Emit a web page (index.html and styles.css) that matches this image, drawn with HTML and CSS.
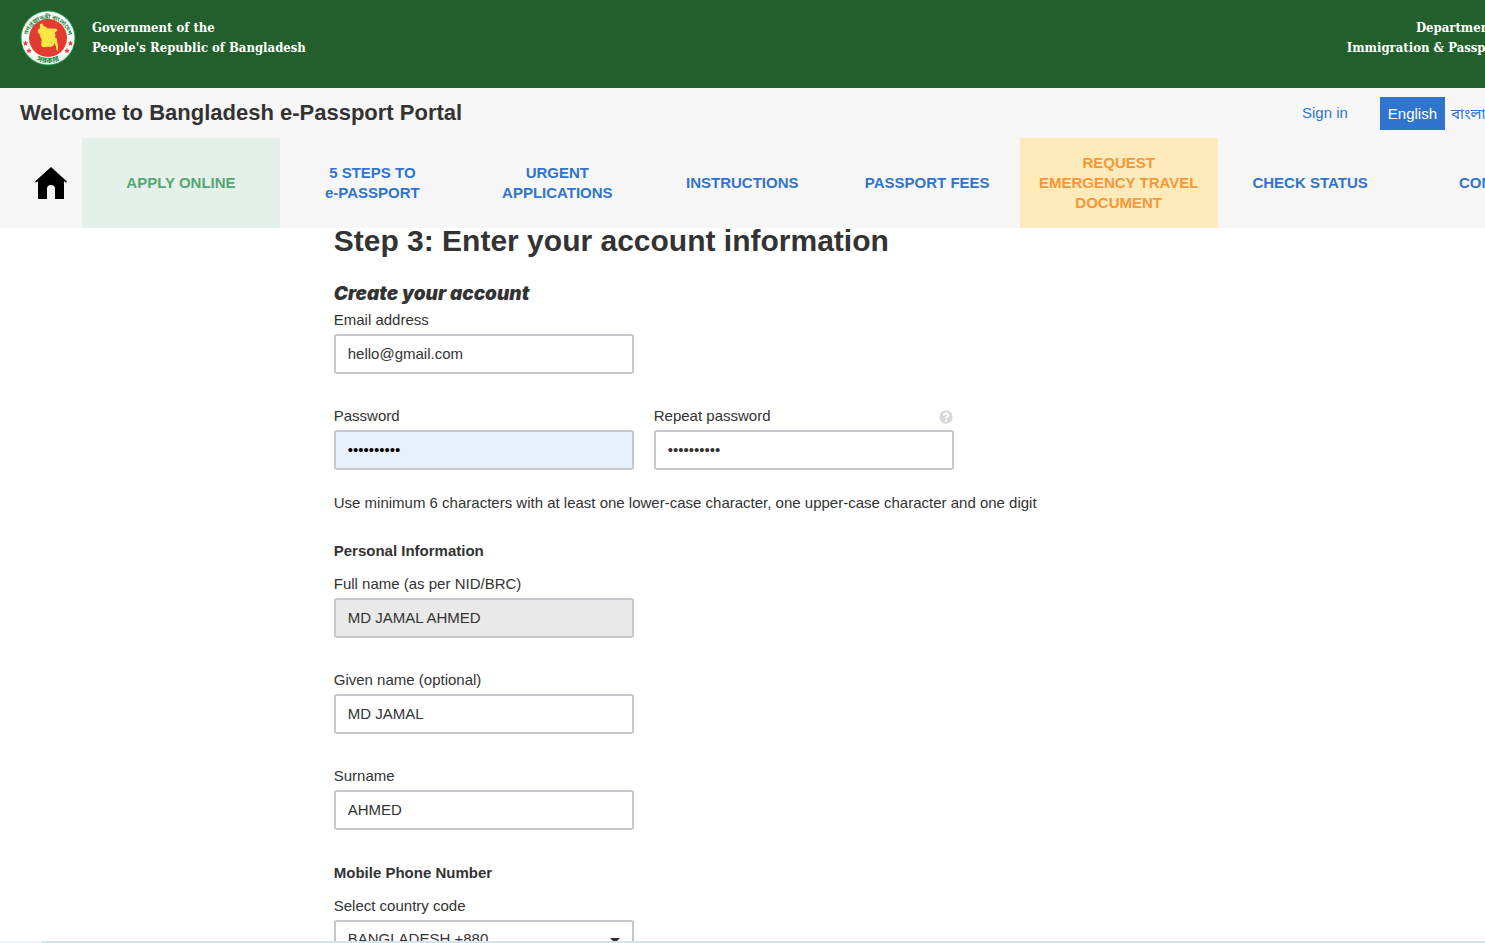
FILE: index.html
```html
<!DOCTYPE html>
<html lang="en">
<head>
<meta charset="utf-8">
<title>Bangladesh e-Passport Portal</title>
<link rel="stylesheet" href="styles.css">
</head>
<body>
<div class="page">
  <header class="gov">
    <svg class="seal" viewBox="0 0 56 56" aria-hidden="true">
      <defs>
        <path id="arc-top" d="M8 34A20.500 20.500 0 1 1 48 34"/>
        <path id="arc-bottom" d="M9 44.500A25.200 25.200 0 0 0 47 44.500"/>
      </defs>
      <circle cx="28" cy="28" r="27.500" fill="#2a9a50"/>
      <circle cx="28" cy="28" r="26.500" fill="#f8faf6"/>
      <circle cx="28" cy="28" r="19" fill="#e03c31"/>
      <g class="seal-text" lang="bn">
        <text><textPath href="#arc-top" startOffset="50%">গণপ্রজাতন্ত্রী বাংলাদেশ</textPath></text>
        <text class="seal-base"><textPath href="#arc-bottom" startOffset="50%">সরকার</textPath></text>
      </g>
      <g fill="#df4038">
        <path id="star" d="M5.500 30.500l.8 1.800 2 .2-1.500 1.300.4 2-1.700-1-1.700 1 .4-2-1.500-1.300 2-.2z"/>
        <use href="#star" x="3.500" y="7.500"/>
        <use href="#star" x="45" y="0"/>
        <use href="#star" x="41.500" y="7.500"/>
      </g>
      <path d="M20 14l2.500-.5 1 2.500 3 1 .5 1.500h3.500l6 .2 1 1.800-2.500 2 .5 3.500-1 1.500 2 .5.700 4 .8 4 0 5.500-1.500-1.500-.8-4.500-1.500-2.500-.5 2.500-3.200 1.500-3-.3-2 .6-3.300-.3-1-2 .5-5.500-1.500-3-.7-2.500-1.800-1.500.2-2.500 2-2z" fill="#fde545"/>
    </svg>
    <p class="gov-name">Government of the<br>People's Republic of Bangladesh</p>
    <p class="gov-name gov-dept">Department of<br>Immigration &amp; Passports</p>
  </header>

  <div class="masthead">
    <div class="titlebar">
      <p class="site-title">Welcome to Bangladesh e-Passport Portal</p>
      <div class="tools">
        <a class="signin" href="#signin">Sign in</a>
        <a class="lang lang-on" href="#en">English</a>
        <a class="lang" href="#bn" lang="bn">বাংলা</a>
      </div>
    </div>
    <nav class="nav" aria-label="Main">
      <a class="home" href="#home" aria-label="Home">
        <svg viewBox="0 0 32 32" width="32" height="32" aria-hidden="true"><path d="M16 0L32 14.500 31 15.700 29 14V32H20V22q0-4-4-4t-4 4V32H3V14L1 15.700 0 14.500z" fill="#000"/></svg>
      </a>
      <a class="item apply" href="#apply">APPLY ONLINE</a>
      <a class="item" href="#steps">5 STEPS TO<br>e-PASSPORT</a>
      <a class="item" href="#urgent">URGENT<br>APPLICATIONS</a>
      <a class="item" href="#instructions">INSTRUCTIONS</a>
      <a class="item" href="#fees">PASSPORT FEES</a>
      <a class="item travel" href="#travel">REQUEST<br>EMERGENCY TRAVEL<br>DOCUMENT</a>
      <a class="item" href="#status">CHECK STATUS</a>
      <a class="item" href="#contact">CONTACT</a>
    </nav>
  </div>

  <main>
    <form class="form">
      <h1>Step 3: Enter your account information</h1>
      <h2>Create your account</h2>
      <div class="field email">
        <label for="email">Email address</label>
        <input class="box" id="email" type="email" value="hello@gmail.com">
      </div>
      <div class="field password first">
        <label for="pw">Password</label>
        <input class="box filled" id="pw" type="password" value="Abcdefg123">
      </div>
      <div class="field password">
        <div class="label-row">
          <label for="pw2">Repeat password</label>
          <button class="help" type="button" aria-label="Password help">
            <svg viewBox="0 0 14 14" width="14" height="14" aria-hidden="true"><circle cx="7" cy="7" r="6.700" fill="#d9d9d9"/><path d="M4.700 5.500Q4.800 3.400 7 3.400T9.300 5.200Q9.300 6.300 8.100 6.900 7.100 7.400 7.100 8.600" fill="none" stroke="#fff" stroke-width="2"/><circle cx="7.100" cy="10.700" r="1.200" fill="#fff"/></svg>
          </button>
        </div>
        <input class="box" id="pw2" type="password" value="Abcdefg123">
      </div>
      <p class="hint">Use minimum 6 characters with at least one lower-case character, one upper-case character and one digit</p>
      <h3>Personal Information</h3>
      <div class="field first">
        <label for="full">Full name (as per NID/BRC)</label>
        <input class="box locked" id="full" type="text" value="MD JAMAL AHMED" readonly>
      </div>
      <div class="field first">
        <label for="given">Given name (optional)</label>
        <input class="box" id="given" type="text" value="MD JAMAL">
      </div>
      <div class="field first">
        <label for="sur">Surname</label>
        <input class="box" id="sur" type="text" value="AHMED">
      </div>
      <h3>Mobile Phone Number</h3>
      <div class="field first">
        <label for="code">Select country code</label>
        <div class="select">
          <select class="box" id="code"><option>BANGLADESH +880</option></select>
          <svg class="caret" viewBox="0 0 10 5" width="10" height="5" aria-hidden="true"><path d="M0 0H10L5 5z" fill="#2d2d2f"/></svg>
        </div>
      </div>
    </form>
  </main>
</div>
<div class="statusline"></div>
</body>
</html>
```
FILE: styles.css
```css
* { box-sizing: border-box; }
html, body { height: 100%; overflow: hidden; }
body {
  margin: 0;
  background: #fff;
  color: #333;
  font: 15px/20px "Liberation Sans", Arial, sans-serif;
}
h1, h2, h3, p { margin: 0; }
a { color: #3174cd; text-decoration: none; }

/* The layout runs slightly wider than the window, as the menu does */
.page { width: 108.25%; }

.gov {
  display: flex;
  align-items: flex-start;
  gap: 16px;
  padding: 10px 20px 22px;
  background: #235f2c;
  color: #fff;
}
.seal { width: 56px; height: 56px; flex: none; }
.seal-text {
  fill: #1f8a45;
  font: bold 6px "Noto Sans Bengali", "Liberation Sans", sans-serif;
  text-anchor: middle;
}
.seal-base { font-size: 8px; }
.gov-name {
  padding-top: 8px;
  font: bold 13px/20px "DejaVu Serif Condensed", "Liberation Serif", serif;
}
.gov-dept { margin-left: auto; padding-right: 76px; text-align: right; }

.masthead { background: #f7f7f7; }
.titlebar {
  display: flex;
  justify-content: space-between;
  height: 50px;
  padding: 9px 116px 8px 20px;
}
.site-title { font-size: 22px; font-weight: bold; line-height: 32px; }
.tools { display: flex; align-items: flex-start; }
.signin { margin-right: 32px; line-height: 32px; }
.lang {
  padding: 0 6px;
  line-height: 33px;
  font-family: "Liberation Sans", "Noto Sans Bengali", sans-serif;
}
.lang-on { padding: 0 8px; background: #3174cd; color: #fff; }

.nav { display: flex; height: 90px; padding-right: 20px; }
.home {
  display: flex;
  flex: none;
  align-items: center;
  width: 82px;
  padding-left: 35px;
}
.item {
  display: flex;
  flex: 185 1 0;
  align-items: center;
  justify-content: center;
  font-weight: bold;
  text-align: center;
}
.apply { flex-grow: 198; background: #e4f1ea; color: #54a873; }
.travel { flex-grow: 198; background: #ffebb9; color: #f79838; }

.form {
  display: grid;
  grid-template-columns: repeat(3, 1fr);
  column-gap: 20px;
  max-width: 940px;
  margin: 0 auto;
}
h1, h2, h3, .hint { grid-column: 1 / -1; }
h1 { font-size: 30px; line-height: 26px; margin-bottom: 30px; }
h2 {
  margin-bottom: 6px;
  font: italic 900 19px/20px Inter, "Liberation Sans", sans-serif;
}
h3 { font-size: 15px; line-height: 20px; margin: 1px 0 13px; }
.field {
  display: flex;
  flex-direction: column;
  gap: 4px;
  margin-bottom: 32px;
}
.first, .email { grid-column: 1; }
.password { margin-bottom: 23px; }
.password:not(.first) { grid-column: 2; }
.label-row { display: flex; justify-content: space-between; align-items: center; }
.help {
  display: flex;
  margin-right: 1px;
  padding: 2px 0 0;
  border: 0;
  background: none;
}
.box {
  display: block;
  width: 100%;
  height: 40px;
  padding: 0 12px 2px;
  border: 2px solid #c4c8cc;
  border-radius: 3px;
  background: #fff;
  color: #333;
  font: inherit;
  appearance: none;
}
.filled { background: #e8effd; color: #000; }
.locked { background: #e9e9e9; }
.hint { margin-bottom: 27px; }
.select { position: relative; }
.caret { position: absolute; right: 14px; top: 18px; }

.statusline {
  position: fixed;
  inset: auto 0 0;
  height: 2px;
  background: linear-gradient(90deg, #eef4f8 42px, #d4e4ec 42px);
}
```
